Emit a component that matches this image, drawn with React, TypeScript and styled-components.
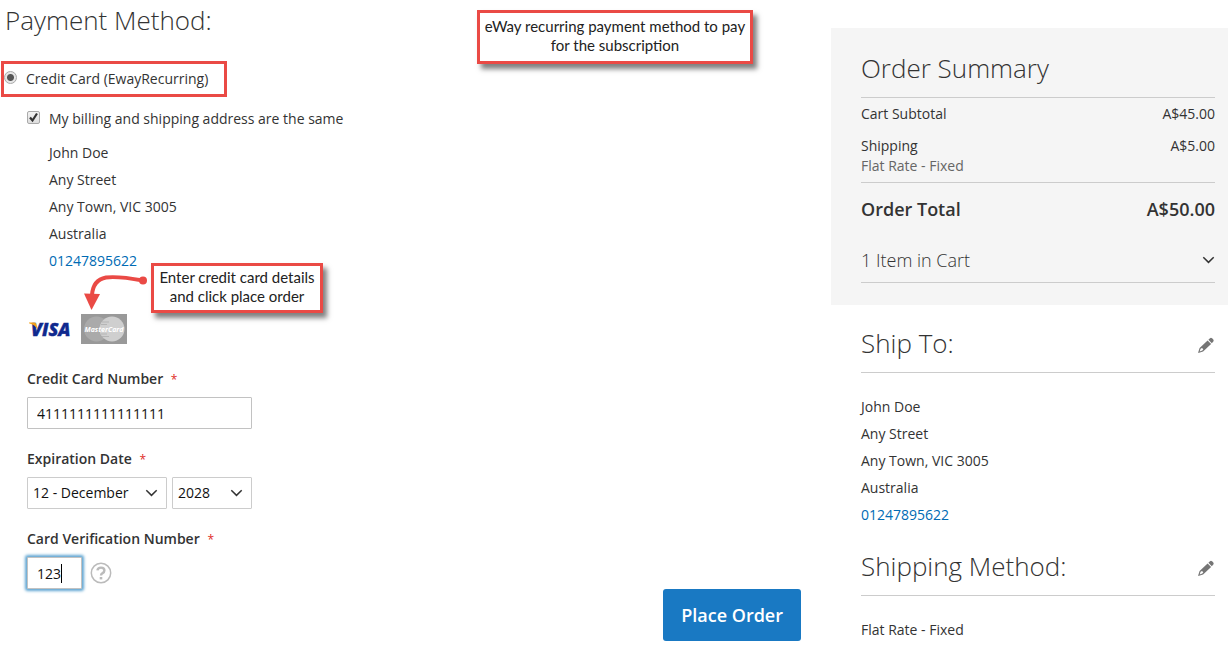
import React from "react";
import styled, { createGlobalStyle } from "styled-components";

const GlobalStyle = createGlobalStyle`
  *, *::before, *::after { box-sizing: border-box; }
  body {
    margin: 0;
    background: #fff;
    color: #333;
    font: 400 14px/20px "Open Sans", "Noto Sans", sans-serif;
  }
`;

const Page = styled.div`
  display: flex;
  align-items: flex-start;
  gap: 30px;
`;

const Main = styled.main`
  position: relative;
  flex: 1;
  min-width: 0;
  padding-top: 2px;
`;

const PageTitle = styled.h1`
  margin: 0 0 23px;
  padding-left: 5px;
  font-size: 26px;
  line-height: 36px;
  font-weight: 300;
`;

const MethodBox = styled.div`
  display: flex;
  align-items: center;
  width: 226px;
  height: 36px;
  margin-left: 1px;
  border: 3px solid #ea4a45;
`;

const MethodLabel = styled.label`
  display: flex;
  align-items: center;
  gap: 9px;
`;

const Radio = styled.input`
  appearance: none;
  width: 13px;
  height: 13px;
  margin: 0 0 3px;
  border: 1px solid #a9a9a9;
  border-radius: 50%;
  background: radial-gradient(circle, #555 0 3px, #e6e6e6 4px);
`;

const Details = styled.form`
  padding: 12px 27px 0;
`;

const SameAddress = styled.label`
  display: flex;
  align-items: center;
  gap: 9px;
  margin-bottom: 10px;
`;

const CheckWrap = styled.span`
  display: grid;
  margin-bottom: 3px;
  & > * { grid-area: 1 / 1; }
  svg { pointer-events: none; }
`;

const Checkbox = styled.input`
  appearance: none;
  width: 13px;
  height: 13px;
  margin: 0;
  border: 1px solid #aaa;
  border-radius: 2px;
  background: linear-gradient(#f2f2f2, #dedede);
`;

const Address = styled.address<{ $indent?: boolean }>`
  padding-left: ${(p) => (p.$indent ? "22px" : "0")};
  font-style: normal;
  line-height: 27px;
`;

const Phone = styled.a`
  color: #006bb4;
  text-decoration: none;
`;

const Cards = styled.div`
  display: flex;
  align-items: center;
  gap: 9px;
  margin: 40px 0 25px 2px;
`;

const Field = styled.div`
  & + & { margin-top: 20px; }
`;

const FieldLabel = styled.label`
  display: block;
  margin-bottom: 8px;
  font-weight: 600;
`;

const Star = styled.span`
  margin-left: 4px;
  color: #e02b27;
  font-size: 12px;
  line-height: 12px;
  font-weight: 400;
`;

const Controls = styled.div<{ $gap?: number }>`
  display: flex;
  align-items: center;
  gap: ${(p) => p.$gap ?? 5}px;
`;

const TextInput = styled.input<{ $w: number }>`
  width: ${(p) => p.$w}px;
  height: 32px;
  padding: 0 9px;
  border: 1px solid #c2c2c2;
  border-radius: 1px;
  background: #fff;
  color: #111;
  font: inherit;
  &:focus {
    outline: none;
    box-shadow: 0 0 3px 2px #5fa5d2;
  }
`;

const CodeBox = styled.span`
  position: relative;
  display: flex;
  input { caret-color: transparent; }
`;

const Caret = styled.span`
  position: absolute;
  left: 34px;
  top: 7px;
  width: 1px;
  height: 19px;
  background: #000;
  pointer-events: none;
`;

const SelectWrap = styled.span<{ $w: number }>`
  display: grid;
  align-items: center;
  width: ${(p) => p.$w}px;
  & > * { grid-area: 1 / 1; }
  svg { justify-self: end; margin-right: 9px; pointer-events: none; }
`;

const Select = styled.select`
  appearance: none;
  width: 100%;
  height: 32px;
  padding: 0 5px;
  border: 1px solid #ccc;
  border-radius: 1px;
  background: #fff;
  color: #111;
  font: inherit;
`;

const IconButton = styled.button`
  display: flex;
  padding: 0;
  border: 0;
  background: none;
`;

const Actions = styled.div`
  display: flex;
  justify-content: flex-end;
`;

const PlaceOrder = styled.button`
  height: 52px;
  padding: 0 18px;
  border: 0;
  border-radius: 3px;
  background: #1979c3;
  color: #fff;
  font: 600 18px/24px "Open Sans", "Noto Sans", sans-serif;
`;

const Callout = styled.div<{ $x: number; $y: number; $w: number; $pad: number }>`
  position: absolute;
  left: ${(p) => p.$x}px;
  top: ${(p) => p.$y}px;
  width: ${(p) => p.$w}px;
  padding: ${(p) => p.$pad}px 0 ${(p) => p.$pad + 2}px;
  border: 3px solid #ea4a45;
  background: #fff;
  box-shadow: 4px 5px 5px rgba(0, 0, 0, 0.5);
  color: #222;
  font: 400 15px/19px Lato, "Noto Sans", sans-serif;
  text-align: center;
  white-space: nowrap;
`;

const Arrow = styled.svg`
  position: absolute;
  left: 80px;
  top: 270px;
`;

const Side = styled.aside`
  flex: 0 0 397px;
  padding-top: 28px;
`;

const Summary = styled.section`
  padding: 22px 13px 22px 30px;
  background: #f5f5f5;
`;

const SideTitle = styled.h2`
  margin: 0;
  font-size: 26px;
  line-height: 36px;
  font-weight: 300;
`;

const Totals = styled.table`
  width: 100%;
  margin-top: 11px;
  border-collapse: collapse;
  border-top: 1px solid #ccc;
  th, td {
    padding: 6px 0;
    font-weight: 400;
    text-align: left;
    vertical-align: top;
  }
  td { text-align: right; }
`;

const Rate = styled.span`
  display: block;
  color: #666;
`;

const GrandTotal = styled.tr`
  border-top: 1px solid #ccc;
  && th, && td {
    padding: 13px 0 15px;
    font-size: 18px;
    line-height: 26px;
    font-weight: 600;
  }
`;

const CartToggle = styled.button`
  display: flex;
  align-items: center;
  justify-content: space-between;
  width: 100%;
  padding: 10px 0 9px;
  border: 0;
  border-bottom: 1px solid #ccc;
  background: none;
  color: #333;
  font: 300 18px/26px "Open Sans", "Noto Sans", sans-serif;
`;

const InfoBlock = styled.section`
  padding: 20px 13px 0 30px;
`;

const InfoHead = styled.div`
  display: flex;
  align-items: center;
  justify-content: space-between;
  margin-bottom: 20px;
  padding-bottom: 11px;
  border-bottom: 1px solid #ccc;
  button { margin-top: 4px; }
`;

const InfoText = styled.p`
  margin: 0;
  line-height: 27px;
`;

const Chevron = () => (
  <svg width="13" height="8" viewBox="0 0 13 8" fill="none" stroke="#333" strokeWidth="1.5">
    <path d="M1.3 1.2 6.5 6.4l5.2-5.2" />
  </svg>
);

const Pencil = () => (
  <svg width="17" height="17" viewBox="0 0 17 17" fill="#757575">
    <path
      fillRule="evenodd"
      d="M0 16 1.600 10.900 9.600 3.400l3.500 3.500-8 7.600ZM2.600 11.800 1.700 14.400l2.600-.8 1-1.300-1.300-1.300Z"
    />
    <path d="m10.400 2.700 1.600-1.500q1-.8 2.100.1l1.200 1.200q.8 1.100 0 2.100l-1.500 1.600Z" />
  </svg>
);

const Visa = () => (
  <svg width="43" height="30" viewBox="0 0 43 30" role="img" aria-label="Visa">
    <text
      x="2" y="22" fill="#10298e" stroke="#10298e" strokeWidth="0.4"
      fontFamily="Open Sans, sans-serif" fontSize="18" fontWeight="800" fontStyle="italic"
    >
      VISA
    </text>
    <path d="M0 8.600h5.200q1.800 0 2.300 1.800l1.200 5.600Q6 10.500 0 9.200Z" fill="#f3a11c" />
  </svg>
);

const MasterCard = () => (
  <svg width="46" height="30" viewBox="0 0 46 30" role="img" aria-label="MasterCard">
    <path d="M0 0h46v30H0z" fill="#999" />
    <circle cx="15.500" cy="15" r="12.500" fill="#aaa" />
    <circle cx="31" cy="15" r="12.500" fill="#cfcfcf" />
    <path d="M21 8h7M20 10.500h6M20 20h6M21 22.500h7" stroke="#b5b5b5" />
    <text
      x="23" y="18" textAnchor="middle" fill="#fff" fontFamily="Open Sans, sans-serif"
      fontSize="7" fontWeight="700" fontStyle="italic"
    >
      MasterCard
    </text>
  </svg>
);

const Help = () => (
  <svg width="22" height="22" viewBox="0 0 22 22" fill="none" stroke="#bbb">
    <circle cx="11" cy="11" r="9.700" strokeWidth="1.500" />
    <path d="M7.400 8.400Q7.800 5.600 11 5.600q3.400 0 3.400 2.900 0 1.600-1.800 2.600Q11 12 11 13.400" strokeWidth="2.400" />
    <path d="M11 15v2.400" strokeWidth="2.600" />
  </svg>
);

const AddressLines = ({ indent }: { indent?: boolean }) => (
  <Address $indent={indent}>
    John Doe<br />
    Any Street<br />
    Any Town, VIC 3005<br />
    Australia<br />
    <Phone href="tel:01247895622">01247895622</Phone>
  </Address>
);

export default function App() {
  return (
    <>
      <GlobalStyle />
      <Page>
        <Main>
          <PageTitle>Payment Method:</PageTitle>
          <MethodBox>
            <MethodLabel>
              <Radio type="radio" name="method" defaultChecked />
              Credit Card (EwayRecurring)
            </MethodLabel>
          </MethodBox>
          <Details onSubmit={(e) => e.preventDefault()}>
            <SameAddress>
              <CheckWrap>
                <Checkbox type="checkbox" defaultChecked />
                <svg width="13" height="13" viewBox="0 0 13 13" fill="none" stroke="#333" strokeWidth="2.200">
                  <path d="m3 6.500 2.500 3 4.500-7" />
                </svg>
              </CheckWrap>
              My billing and shipping address are the same
            </SameAddress>
            <AddressLines indent />
            <Cards>
              <Visa />
              <MasterCard />
            </Cards>
            <Field>
              <FieldLabel htmlFor="number">Credit Card Number <Star>*</Star></FieldLabel>
              <Controls>
                <TextInput id="number" $w={225} defaultValue="4111111111111111" />
              </Controls>
            </Field>
            <Field>
              <FieldLabel htmlFor="month">Expiration Date <Star>*</Star></FieldLabel>
              <Controls>
                <SelectWrap $w={140}>
                  <Select id="month"><option>12 - December</option></Select>
                  <Chevron />
                </SelectWrap>
                <SelectWrap $w={80}>
                  <Select aria-label="Year"><option>2028</option></Select>
                  <Chevron />
                </SelectWrap>
              </Controls>
            </Field>
            <Field>
              <FieldLabel htmlFor="cvv">Card Verification Number <Star>*</Star></FieldLabel>
              <Controls $gap={8}>
                <CodeBox>
                  <TextInput id="cvv" $w={55} defaultValue="123" autoFocus />
                  <Caret />
                </CodeBox>
                <IconButton type="button" aria-label="What is this?"><Help /></IconButton>
              </Controls>
            </Field>
          </Details>
          <Actions><PlaceOrder type="button">Place Order</PlaceOrder></Actions>
          <Callout $x={477} $y={10} $w={276} $pad={4}>
            eWay recurring payment method to pay<br />for the subscription
          </Callout>
          <Callout $x={151} $y={263} $w={172} $pad={2}>
            Enter credit card details<br />and click place order
          </Callout>
          <Arrow width="70" height="42" viewBox="0 0 70 42">
            <path d="M63 10.500Q38 6 26 7.500 13 10 12 25" fill="none" stroke="#ea4a45" strokeWidth="4" />
            <path d="M4 23.500 20 24 11.500 40Z" fill="#ea4a45" />
            <circle cx="63" cy="10.500" r="4" fill="#ea4a45" />
          </Arrow>
        </Main>
        <Side>
          <Summary>
            <SideTitle>Order Summary</SideTitle>
            <Totals>
              <tbody>
                <tr><th scope="row">Cart Subtotal</th><td>A$45.00</td></tr>
                <tr><th scope="row">Shipping<Rate>Flat Rate - Fixed</Rate></th><td>A$5.00</td></tr>
                <GrandTotal><th scope="row">Order Total</th><td>A$50.00</td></GrandTotal>
              </tbody>
            </Totals>
            <CartToggle type="button">1 Item in Cart <Chevron /></CartToggle>
          </Summary>
          <InfoBlock>
            <InfoHead>
              <SideTitle>Ship To:</SideTitle>
              <IconButton type="button" aria-label="Edit address"><Pencil /></IconButton>
            </InfoHead>
            <AddressLines />
          </InfoBlock>
          <InfoBlock>
            <InfoHead>
              <SideTitle>Shipping Method:</SideTitle>
              <IconButton type="button" aria-label="Edit shipping method"><Pencil /></IconButton>
            </InfoHead>
            <InfoText>Flat Rate - Fixed</InfoText>
          </InfoBlock>
        </Side>
      </Page>
    </>
  );
}
